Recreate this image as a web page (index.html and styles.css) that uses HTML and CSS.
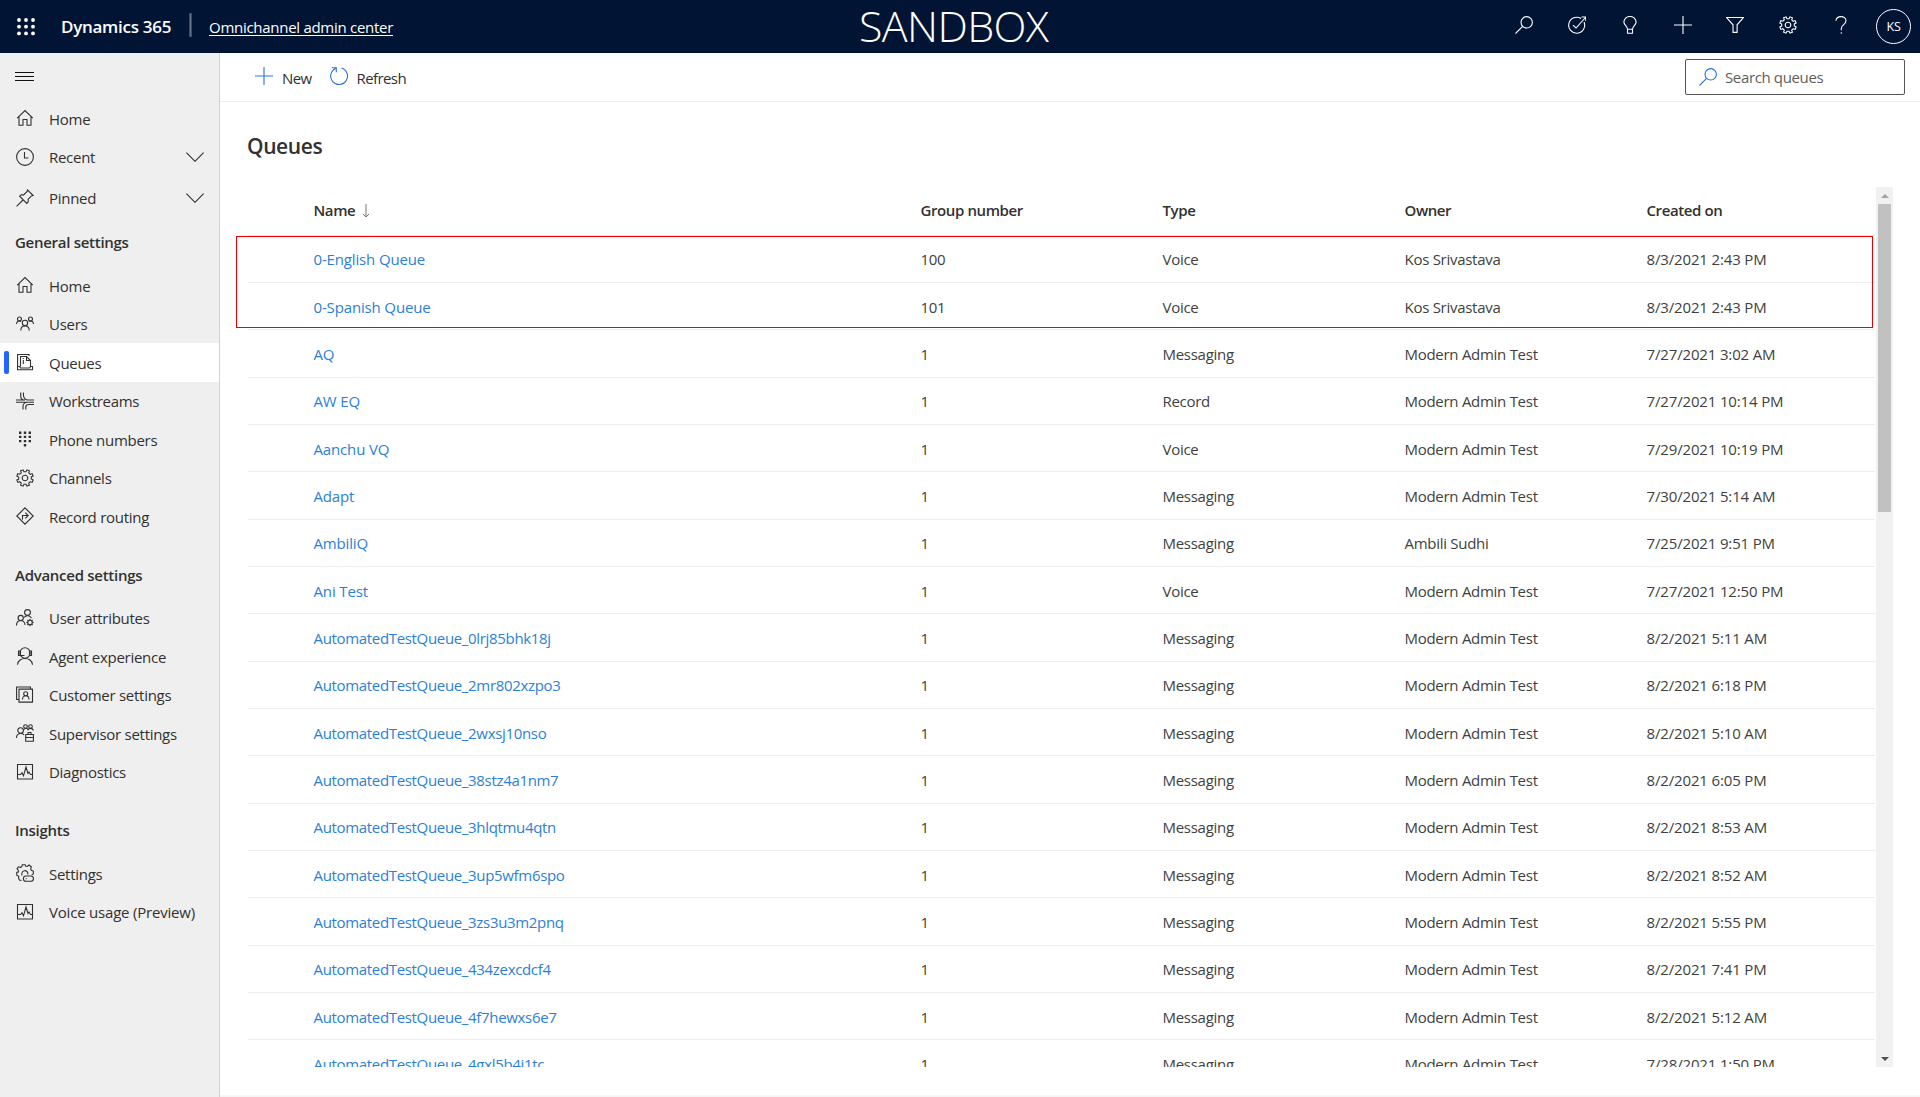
FILE: index.html
```html
<!DOCTYPE html>
<html lang="en">
<head>
<meta charset="utf-8">
<title>Omnichannel admin center</title>
<link rel="stylesheet" href="styles.css">
</head>
<body>
<svg class="sprite" aria-hidden="true">
  <symbol id="i-home" viewBox="0 0 18 18"><path d="M1.2 9.2 9 1.5l7.8 7.7M3 7.6v8.7h4V10.5h4v5.8h4V7.6"/></symbol>
  <symbol id="i-clock" viewBox="0 0 18 18"><circle cx="9" cy="9" r="8.4"/><path d="M8.5 4v6h4"/></symbol>
  <symbol id="i-pin" viewBox="0 0 18 18"><path d="M11.5.9 17.1 6.500l-1.600.4-3.400 3.400.2 2.500-1.500 1.600L3.600 7.200l1.600-1.500 2.500.2 3.400-3.400zM7 11 .6 17.400"/></symbol>
  <symbol id="i-users" viewBox="0 0 18 18"><circle cx="3.500" cy="4" r="2"/><circle cx="14.500" cy="4" r="2"/><circle cx="9" cy="8" r="2.700"/><path d="M.5 9c0-3 3-3.500 4.500-2.500M17.500 9c0-3-3-3.500-4.500-2.500M4.800 15.500c0-6 8.400-6 8.400 0"/></symbol>
  <symbol id="i-queues" viewBox="0 0 18 18"><path d="M13 3V1.500H1.600v12M4.500 13.500v-10h6l4 4v6M10.500 3.500v4h4M1.500 13.500h2l1 1.500h9l1-1.500h2v3.200h-15zM7.300 5v1M7.300 7v4"/></symbol>
  <symbol id="i-streams" viewBox="0 0 18 18"><path d="M4.700.5v3c0 3 1 4.600 3.500 4.600M7.400.5v2.500c0 3 2 5 5 5H18M0 10.200h18M0 8h9M7 17.500v-3c0-2.500 2-4.300 4.500-4.300M9.800 17.500v-2.500c0-1.500 1-2.500 3-2.500H18"/></symbol>
  <symbol id="i-dialpad" viewBox="0 0 18 18"><path class="solid" d="M3 1.500h2.400v2.400H3zM7.800 1.500h2.400v2.400H7.800zM12.600 1.500H15v2.400h-2.400zM3 5.700h2.400v2.400H3zM7.800 5.700h2.400v2.400H7.800zM12.600 5.700H15v2.400h-2.400zM3 9.900h2.400v2.400H3zM7.800 9.900h2.400v2.400H7.800zM12.600 9.900H15v2.400h-2.400zM7.800 14.100h2.400v2.400H7.800z"/></symbol>
  <symbol id="i-gear" viewBox="-9 -9 18 18"><path transform="rotate(22.500)" d="M8.300-1.300V1.300L6.200 1.500 5.400 3.400 6.800 4.900 4.900 6.800 3.400 5.400 1.500 6.200 1.300 8.300H-1.300L-1.500 6.200-3.400 5.400-4.900 6.800-6.800 4.900-5.400 3.400-6.200 1.500-8.300 1.300V-1.300L-6.200-1.500-5.400-3.400-6.800-4.900-4.900-6.800-3.400-5.400-1.500-6.200-1.300-8.300H1.300L1.500-6.200 3.400-5.400 4.900-6.800 6.800-4.900 5.400-3.400 6.200-1.500Z"/><circle r="2.800"/></symbol>
  <symbol id="i-route" viewBox="0 0 18 18"><path d="M9 .8 17.200 9 9 17.200.8 9zM6.500 12.500V8.500h5M9.300 5.700l2.900 2.800-2.900 2.800"/></symbol>
  <symbol id="i-userattr" viewBox="0 0 18 18"><circle cx="11.500" cy="3.500" r="2.900"/><circle cx="4.700" cy="9" r="2.600"/><path d="M.5 16.500c0-6.500 8.500-6.500 8.500-.5M8 8.500c1.500-2 5.500-3 7.500.5"/><circle cx="14" cy="13.500" r="2.300"/><path d="M14 9.800v1.400M14 15.800v1.400M10.300 13.500h1.400M16.300 13.500h1.400M11.400 10.900l1 1M15.600 15.100l1 1M16.600 10.900l-1 1M12.400 15.100l-1 1"/></symbol>
  <symbol id="i-agent" viewBox="0 0 18 18"><circle cx="9" cy="6" r="5.200"/><path d="M3.800 4H2.500v4.500h2V4M14.200 4h1.300v4.500h-2V4M5 8.500h3.500M1.500 17.800c.5-8.500 14.500-8.500 15 0"/></symbol>
  <symbol id="i-customer" viewBox="0 0 18 18"><path d="M2.600 13.500H.6V1h13.900v2M3 3.100h13.500v13H3z"/><circle cx="9.700" cy="7.700" r="2"/><path d="M6.500 13.500c0-5 6.500-5 6.500 0"/></symbol>
  <symbol id="i-supervisor" viewBox="0 0 18 18"><circle cx="4.600" cy="6.500" r="2.800"/><circle cx="9.500" cy="2.500" r="1.800"/><circle cx="14.500" cy="2.500" r="1.800"/><path d="M.5 14c0-5.500 6-5.500 7.500-3M7.500 6c1.500-2.500 4-2 4.500 0 .5-2 4.500-2.500 5.500.5M9.700 10.500h7.700v6.700H9.700zM9.700 13.500h7.700M12 10.500v-2h3v2"/></symbol>
  <symbol id="i-diag" viewBox="0 0 18 18"><path d="M1.500 1.500h15v14.500h-15zM1.500 11.500h3l1.500-1.700 1.500 3 2.500-8.800 2 6.500 1-1.500 1.500 2.500h2"/></symbol>
  <symbol id="i-geartoggle" viewBox="-9 -9 18 18"><path d="M-3.500 7.500-5.600 7-6.500 5-6.200 3.300-8.300 2.200V-.5L-6.500-1.200-6.900-3-8-4.300-6.500-6.200-4.600-5.700-3.300-6.200-2.700-8.200H.2L1-6.500 2.500-6.800 4-8 6.300-6.300 5.700-4.200 6.300-2.800 8.300-2V1L6.700 1.700"/><path d="M-3 2.500C-4.500-3.500 3.500-4 2.800 1.500"/><rect x="-1.600" y="3" width="10" height="5.300" rx="2.600"/><path d="M.8 5.600h.8"/></symbol>
  <symbol id="i-search" viewBox="0 0 18 18"><circle cx="11.700" cy="6.300" r="5.700"/><path d="M7.600 10.400.5 17.500"/></symbol>
  <symbol id="i-target" viewBox="0 0 18 18"><path d="M13 2.500A8 8 0 1 0 16 6M5 9.200l3 2.800L17.500 1.500M13.500 1h4.300v4"/></symbol>
  <symbol id="i-bulb" viewBox="0 0 18 18"><path d="M6.500 13.300c0-3.300-3.600-4-3.600-7.200a6.100 5.600 0 0 1 12.200 0c0 3.200-3.600 3.900-3.600 7.200zM6.500 13.300v3.900h5v-3.900"/></symbol>
  <symbol id="i-plus" viewBox="0 0 18 18"><path d="M9 0v18M0 9h18"/></symbol>
  <symbol id="i-filter" viewBox="0 0 18 18"><path d="M.6 1.500h16.800l-6.300 7.300v7.600H7V8.800z"/></symbol>
  <symbol id="i-help" viewBox="0 0 18 18"><path d="M4 4.800C4.200-.8 14-.8 14 4.800c0 3.700-4.700 4-4.700 7.700v1.800M9.300 16.200v1.600"/></symbol>
  <symbol id="i-refresh" viewBox="0 0 18 18"><path d="M5.600 1.400A8.400 8.400 0 1 0 11.500 1M1.800.8h4.500v4.400"/></symbol>
  <symbol id="i-chevron" viewBox="0 0 18 10"><path d="M.4.700 9 9.300 17.600.7"/></symbol>
  <symbol id="i-down" viewBox="0 0 8 14"><path d="M4 0v13M1 10l3 3 3-3"/></symbol>
</svg>

<header class="topbar">
  <svg class="waffle" viewBox="0 0 18 18"><g><circle cx="2" cy="2" r="1.900"/><circle cx="9" cy="2" r="1.900"/><circle cx="16" cy="2" r="1.900"/><circle cx="2" cy="8.700" r="1.900"/><circle cx="9" cy="8.700" r="1.900"/><circle cx="16" cy="8.700" r="1.900"/><circle cx="2" cy="15.400" r="1.900"/><circle cx="9" cy="15.400" r="1.900"/><circle cx="16" cy="15.400" r="1.900"/></g></svg>
  <span class="brand">Dynamics 365</span>
  <span class="divider"></span>
  <a class="app">Omnichannel admin center</a>
  <span class="env">SANDBOX</span>
  <nav class="tools">
    <svg><use href="#i-search"/></svg>
    <svg><use href="#i-target"/></svg>
    <svg><use href="#i-bulb"/></svg>
    <svg><use href="#i-plus"/></svg>
    <svg><use href="#i-filter"/></svg>
    <svg><use href="#i-gear"/></svg>
    <svg><use href="#i-help"/></svg>
  </nav>
  <span class="avatar">KS</span>
</header>

<div class="body">
  <aside class="sidebar">
    <div class="burger"><i></i><i></i><i></i></div>
    <a class="item"><svg><use href="#i-home"/></svg><span>Home</span></a>
    <a class="item"><svg><use href="#i-clock"/></svg><span>Recent</span><svg class="chev"><use href="#i-chevron"/></svg></a>
    <a class="item tall"><svg><use href="#i-pin"/></svg><span>Pinned</span><svg class="chev"><use href="#i-chevron"/></svg></a>
    <h2>General settings</h2>
    <a class="item"><svg><use href="#i-home"/></svg><span>Home</span></a>
    <a class="item"><svg><use href="#i-users"/></svg><span>Users</span></a>
    <a class="item active"><svg><use href="#i-queues"/></svg><span>Queues</span></a>
    <a class="item"><svg><use href="#i-streams"/></svg><span>Workstreams</span></a>
    <a class="item"><svg><use href="#i-dialpad"/></svg><span>Phone numbers</span></a>
    <a class="item"><svg><use href="#i-gear"/></svg><span>Channels</span></a>
    <a class="item"><svg><use href="#i-route"/></svg><span>Record routing</span></a>
    <h2 class="gap">Advanced settings</h2>
    <a class="item"><svg><use href="#i-userattr"/></svg><span>User attributes</span></a>
    <a class="item"><svg><use href="#i-agent"/></svg><span>Agent experience</span></a>
    <a class="item"><svg><use href="#i-customer"/></svg><span>Customer settings</span></a>
    <a class="item"><svg><use href="#i-supervisor"/></svg><span>Supervisor settings</span></a>
    <a class="item"><svg><use href="#i-diag"/></svg><span>Diagnostics</span></a>
    <h2 class="gap">Insights</h2>
    <a class="item"><svg><use href="#i-geartoggle"/></svg><span>Settings</span></a>
    <a class="item"><svg><use href="#i-diag"/></svg><span class="wide">Voice usage (Preview)</span></a>
  </aside>

  <main class="main">
    <div class="commands">
      <a class="cmd new"><svg><use href="#i-plus"/></svg><span>New</span></a>
      <a class="cmd refresh"><svg><use href="#i-refresh"/></svg><span>Refresh</span></a>
      <label class="search"><svg><use href="#i-search"/></svg><span>Search queues</span></label>
    </div>
    <h1>Queues</h1>
    <section class="list">
      <div class="table">
        <div class="row head"><span>Name<svg class="sort"><use href="#i-down"/></svg></span><span>Group number</span><span>Type</span><span>Owner</span><span>Created on</span></div>
        <div class="row"><a>0-English Queue</a><span>100</span><span>Voice</span><span>Kos Srivastava</span><span>8/3/2021 2:43 PM</span></div>
        <div class="row"><a>0-Spanish Queue</a><span>101</span><span>Voice</span><span>Kos Srivastava</span><span>8/3/2021 2:43 PM</span></div>
        <div class="row"><a>AQ</a><span>1</span><span>Messaging</span><span>Modern Admin Test</span><span>7/27/2021 3:02 AM</span></div>
        <div class="row"><a>AW EQ</a><span>1</span><span>Record</span><span>Modern Admin Test</span><span>7/27/2021 10:14 PM</span></div>
        <div class="row"><a>Aanchu VQ</a><span>1</span><span>Voice</span><span>Modern Admin Test</span><span>7/29/2021 10:19 PM</span></div>
        <div class="row"><a>Adapt</a><span>1</span><span>Messaging</span><span>Modern Admin Test</span><span>7/30/2021 5:14 AM</span></div>
        <div class="row"><a>AmbiliQ</a><span>1</span><span>Messaging</span><span>Ambili Sudhi</span><span>7/25/2021 9:51 PM</span></div>
        <div class="row"><a>Ani Test</a><span>1</span><span>Voice</span><span>Modern Admin Test</span><span>7/27/2021 12:50 PM</span></div>
        <div class="row auto"><a>AutomatedTestQueue_0lrj85bhk18j</a><span>1</span><span>Messaging</span><span>Modern Admin Test</span><span>8/2/2021 5:11 AM</span></div>
        <div class="row auto"><a>AutomatedTestQueue_2mr802xzpo3</a><span>1</span><span>Messaging</span><span>Modern Admin Test</span><span>8/2/2021 6:18 PM</span></div>
        <div class="row auto"><a>AutomatedTestQueue_2wxsj10nso</a><span>1</span><span>Messaging</span><span>Modern Admin Test</span><span>8/2/2021 5:10 AM</span></div>
        <div class="row auto"><a>AutomatedTestQueue_38stz4a1nm7</a><span>1</span><span>Messaging</span><span>Modern Admin Test</span><span>8/2/2021 6:05 PM</span></div>
        <div class="row auto"><a>AutomatedTestQueue_3hlqtmu4qtn</a><span>1</span><span>Messaging</span><span>Modern Admin Test</span><span>8/2/2021 8:53 AM</span></div>
        <div class="row auto"><a>AutomatedTestQueue_3up5wfm6spo</a><span>1</span><span>Messaging</span><span>Modern Admin Test</span><span>8/2/2021 8:52 AM</span></div>
        <div class="row auto"><a>AutomatedTestQueue_3zs3u3m2pnq</a><span>1</span><span>Messaging</span><span>Modern Admin Test</span><span>8/2/2021 5:55 PM</span></div>
        <div class="row auto"><a>AutomatedTestQueue_434zexcdcf4</a><span>1</span><span>Messaging</span><span>Modern Admin Test</span><span>8/2/2021 7:41 PM</span></div>
        <div class="row auto"><a>AutomatedTestQueue_4f7hewxs6e7</a><span>1</span><span>Messaging</span><span>Modern Admin Test</span><span>8/2/2021 5:12 AM</span></div>
        <div class="row auto"><a>AutomatedTestQueue_4gxl5b4j1tc</a><span>1</span><span>Messaging</span><span>Modern Admin Test</span><span>7/28/2021 1:50 PM</span></div>
      </div>
      <div class="scrollbar"><b class="up"></b><i class="thumb"></i><b class="down"></b></div>
      <div class="highlight"></div>
    </section>
    <div class="footer"></div>
  </main>
</div>
</body>
</html>
```
FILE: styles.css
```css
* { box-sizing: border-box; }
body {
  margin: 0;
  height: 1097px;
  display: flex;
  flex-direction: column;
  overflow: hidden;
  background: #fff;
  color: #323130;
  font: 15px/20px "Open Sans", "Noto Sans", sans-serif;
  letter-spacing: -0.28px;
}
svg {
  display: block;
  flex: none;
  width: 18px;
  height: 18px;
  fill: none;
  stroke: currentColor;
  stroke-width: 1.1;
  overflow: visible;
}
.sprite { position: absolute; width: 0; height: 0; }
.solid { fill: currentColor; stroke: none; }

/* Top bar */
.topbar {
  flex: none;
  height: 53px;
  display: flex;
  align-items: center;
  position: relative;
  padding: 0 9px 0 17px;
  background: #021434;
  color: #fff;
}
.waffle { fill: #fff; stroke: none; }
.brand { width: 129px; margin-left: 26px; font-size: 17px; font-weight: 600; white-space: nowrap; }
.divider { width: 1px; height: 22px; margin-top: -3px; background: #66728a; outline: 0.5px solid #3c4a65; }
.app { margin: 1px 0 0 18px; text-decoration: underline; text-underline-offset: 2px; }
.env {
  position: absolute;
  left: 859px;
  top: 0;
  font-size: 43px;
  font-weight: 300;
  line-height: 51px;
  letter-spacing: -0.6px;
}
.tools { display: flex; gap: 34.8px; margin: -3px 26px 0 auto; }
.avatar {
  width: 35px;
  height: 35px;
  border: 1px solid #fff;
  border-radius: 50%;
  text-align: center;
  font-size: 12.5px;
  line-height: 34px;
}

.body { flex: 1; min-height: 0; display: flex; }

/* Sidebar */
.sidebar { width: 220px; background: #efefef; border-right: 1px solid #d0d0d0; }
.burger { height: 46px; padding: 19px 0 0 15px; }
.burger i { display: block; width: 19px; height: 1px; background: #111; }
.burger i + i { margin-top: 3px; }
.item {
  position: relative;
  height: 38.5px;
  display: flex;
  align-items: center;
  padding: 0 15px 0 16px;
}
.item span { margin: 1px 0 0 15px; flex: 1; white-space: nowrap; }
.item .wide { letter-spacing: -0.2px; }
.item.tall { height: 43px; }
.item.active { background: #fff; }
.item.active::before {
  content: "";
  position: absolute;
  left: 4px;
  top: 8px;
  width: 5px;
  height: 23px;
  border-radius: 2px;
  background: #2266ff;
}
.item .chev { width: 18px; height: 10px; }
.sidebar h2 {
  height: 47px;
  margin: 0;
  padding-left: 15px;
  font-size: 15px;
  font-weight: 600;
  line-height: 47px;
  letter-spacing: -0.28px;
}
.sidebar h2.gap { margin-top: 16px; }

/* Main */
.main { flex: 1; min-width: 0; display: flex; flex-direction: column; }
.commands {
  flex: none;
  height: 49px;
  display: flex;
  align-items: center;
  padding: 0 15px 0 35px;
  border-bottom: 1px solid #ededed;
}
.cmd { display: flex; align-items: center; }
.cmd svg { color: #2b74d8; margin-top: -3px; }
.cmd span { margin: 1px 0 0 9px; letter-spacing: -0.6px; }
.refresh { margin-left: 18px; }
.search {
  width: 220px;
  height: 36px;
  margin: -1px 0 0 auto;
  display: flex;
  align-items: center;
  padding-left: 13px;
  border: 1px solid #555;
  border-radius: 2px;
  color: #605e5c;
}
.search svg { color: #2b74d8; }
.search span { margin: 1px 0 0 8px; letter-spacing: -0.36px; }
h1 {
  flex: none;
  height: 85px;
  margin: 0;
  padding-left: 27px;
  font-size: 21px;
  font-weight: 600;
  line-height: 88px;
  letter-spacing: -0.4px;
}
.list {
  position: relative;
  height: 880px;
  flex: none;
  display: flex;
  margin: 0 27px 0 28px;
}
.table { flex: 1; overflow: hidden; }
.row {
  height: 47.35px;
  display: grid;
  grid-template-columns: 607px 242px 242px 242px 1fr;
  align-items: center;
  padding: 1px 0 0 65.5px;
  border-bottom: 1px solid #ededed;
  color: #403f3e;
  white-space: nowrap;
}
.row a { color: #2b7fd9; letter-spacing: -0.15px; }
.row.auto a { letter-spacing: -0.33px; }
.row span:last-child { letter-spacing: -0.15px; }
.row.head { height: 48.6px; padding: 0 0 2px 65.5px; color: #323130; font-weight: 600; }
.row.head span { letter-spacing: -0.4px; }
.sort { display: inline-block; width: 8px; height: 14px; margin-left: 7px; vertical-align: -2px; color: #777; stroke-width: 1; }

.scrollbar {
  width: 17px;
  margin-left: 1px;
  display: flex;
  flex-direction: column;
  align-items: center;
  background: #f1f1f1;
}
.scrollbar .thumb { width: 13px; height: 308px; background: #c1c1c1; }
.scrollbar b { height: 17px; display: flex; align-items: center; }
.scrollbar b::before { content: ""; border: 4px solid transparent; }
.scrollbar .up::before { border-top: 0; border-bottom-color: #a3a3a3; }
.scrollbar .down { margin-top: auto; }
.scrollbar .down::before { border-bottom: 0; border-top-color: #505050; }
.highlight {
  position: absolute;
  left: -12px;
  top: 49px;
  width: 1637px;
  height: 92px;
  border: 1px solid #f00000;
}
.footer { height: 2px; margin-top: auto; background: #f5f5f5; }
```
